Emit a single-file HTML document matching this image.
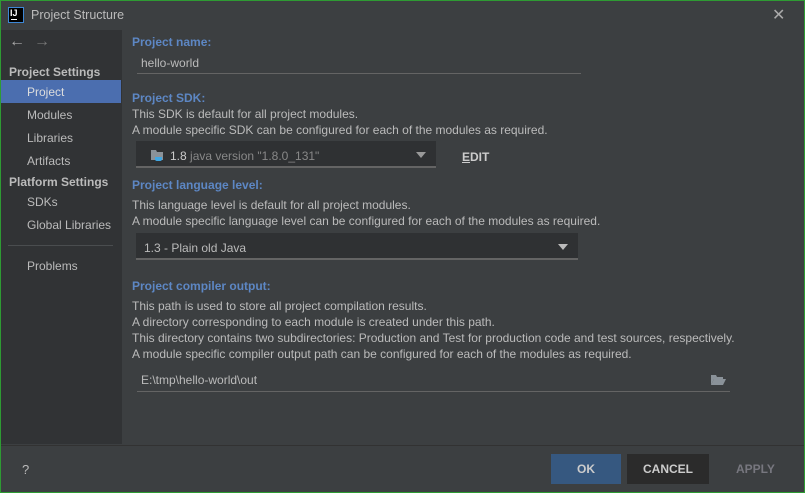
<!DOCTYPE html>
<html><head><meta charset="utf-8"><style>
*{box-sizing:border-box;margin:0;padding:0}
body{width:805px;height:493px;overflow:hidden;background:#3c3f41;font-family:"Liberation Sans",sans-serif;font-size:12px;color:#bbbbbb;position:relative}
.win{position:absolute;left:0;top:0;width:805px;height:493px;border:1px solid #2e9b33;border-top-color:#2e9b33}
.abs{position:absolute;white-space:nowrap}
.side{position:absolute;left:1px;top:30px;width:121px;height:414px;background:#313335}
.lbl{color:#5d87c4;font-weight:bold;font-size:12px}
.si{position:absolute;left:27px}
.hd{position:absolute;left:9px;font-weight:bold;color:#bbbbbb}
.line{position:absolute;height:1px;background:#646464}
</style></head><body>
<div class="win"></div>
<!-- title -->
<div class="abs" style="left:8px;top:7px;width:16px;height:16px;background:#000;border:1px solid #3d87d6"></div>
<div class="abs" style="left:10px;top:8px;color:#fff;font-size:9px;font-weight:bold">IJ</div>
<div class="abs" style="left:11px;top:19px;width:6px;height:1px;background:#fff"></div>
<div class="abs" style="left:31px;top:8px;font-size:12.5px;color:#bbb">Project Structure</div>
<div class="abs" style="left:772px;top:5px;font-size:16px;color:#aaa">✕</div>
<!-- sidebar -->
<div class="side"></div>
<div class="abs" style="left:9px;top:33px;font-size:16px;color:#aaa">←</div>
<div class="abs" style="left:34px;top:33px;font-size:16px;color:#777">→</div>
<div class="hd" style="top:65px">Project Settings</div>
<div class="abs" style="left:1px;top:80px;width:120px;height:23px;background:#4b6eaf"></div>
<div class="si" style="top:85px;color:#ddd">Project</div>
<div class="si" style="top:108px">Modules</div>
<div class="si" style="top:131px">Libraries</div>
<div class="si" style="top:154px">Artifacts</div>
<div class="hd" style="top:175px">Platform Settings</div>
<div class="si" style="top:195px">SDKs</div>
<div class="si" style="top:218px">Global Libraries</div>
<div class="line" style="left:8px;top:245px;width:105px;background:#4a4d4f"></div>
<div class="si" style="top:259px">Problems</div>
<div class="abs" style="left:22px;top:462px;font-size:13px">?</div>
<!-- content -->
<div class="abs lbl" style="left:132px;top:35px">Project name:</div>
<div class="abs" style="left:141px;top:56px">hello-world</div>
<div class="line" style="left:137px;top:73px;width:444px"></div>
<div class="abs lbl" style="left:132px;top:91px">Project SDK:</div>
<div class="abs" style="left:132px;top:107px">This SDK is default for all project modules.</div>
<div class="abs" style="left:132px;top:123px">A module specific SDK can be configured for each of the modules as required.</div>
<div class="abs" style="left:136px;top:141px;width:300px;height:27px;background:#2f3133;border-bottom:2px solid #646464"></div>
<svg class="abs" style="left:150px;top:148px" width="16" height="14"><path d="M1 2h5l1 2h6v8H1z" fill="#8a9299"/><path d="M5 9h7v2a2 2 0 0 1-2 2H7a2 2 0 0 1-2-2z" fill="#40a7e3"/></svg>
<div class="abs" style="left:170px;top:149px"><span style="color:#ccc">1.8</span> <span style="color:#888">java version "1.8.0_131"</span></div>
<svg class="abs" style="left:416px;top:152px" width="10" height="6"><path d="M0 0h10L5 6z" fill="#999"/></svg>
<div class="abs" style="left:462px;top:150px;font-weight:bold;color:#ccc"><u>E</u>DIT</div>
<div class="abs lbl" style="left:132px;top:178px">Project language level:</div>
<div class="abs" style="left:132px;top:198px">This language level is default for all project modules.</div>
<div class="abs" style="left:132px;top:214px">A module specific language level can be configured for each of the modules as required.</div>
<div class="abs" style="left:136px;top:233px;width:442px;height:27px;background:#2f3133;border-bottom:2px solid #646464"></div>
<div class="abs" style="left:144px;top:241px">1.3 - Plain old Java</div>
<svg class="abs" style="left:558px;top:244px" width="10" height="6"><path d="M0 0h10L5 6z" fill="#bbb"/></svg>
<div class="abs lbl" style="left:132px;top:279px">Project compiler output:</div>
<div class="abs" style="left:132px;top:299px">This path is used to store all project compilation results.</div>
<div class="abs" style="left:132px;top:315px">A directory corresponding to each module is created under this path.</div>
<div class="abs" style="left:132px;top:331px">This directory contains two subdirectories: Production and Test for production code and test sources, respectively.</div>
<div class="abs" style="left:132px;top:347px">A module specific compiler output path can be configured for each of the modules as required.</div>
<div class="abs" style="left:141px;top:373px">E:\tmp\hello-world\out</div>
<svg class="abs" style="left:711px;top:374px" width="15" height="11"><path d="M0 1h5l1 2h6v2H3L0 11z" fill="#8a9299"/><path d="M3 5h12l-3 6H0z" fill="#8a9299"/></svg>
<div class="line" style="left:137px;top:391px;width:593px"></div>
<!-- footer -->
<div class="line" style="left:1px;top:445px;width:803px;background:#323232"></div>
<div class="abs" style="left:551px;top:454px;width:70px;height:30px;background:#365880;color:#ccc;font-weight:bold;text-align:center;line-height:30px">OK</div>
<div class="abs" style="left:627px;top:454px;width:82px;height:30px;background:#2b2b2b;color:#ccc;font-weight:bold;text-align:center;line-height:30px">CANCEL</div>
<div class="abs" style="left:736px;top:462px;color:#77777f;font-weight:bold">APPLY</div>
</body></html>
